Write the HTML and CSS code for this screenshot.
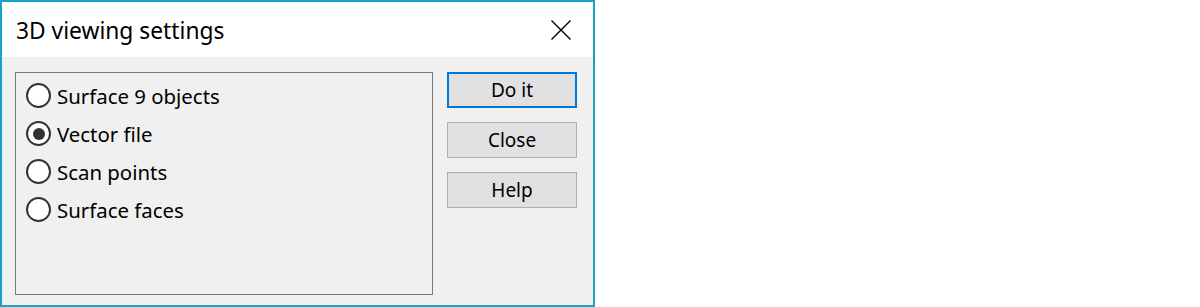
FILE: index.html
```html
<!DOCTYPE html>
<html>
<head>
<meta charset="utf-8" />
<title>3D viewing settings</title>
<link rel="stylesheet" href="styles.css">
</head>
<body>
<div class="dialog">
	<div class="titlebar">
		<span class="title">3D viewing settings</span>
		<span class="close">
			<svg width="20" height="20" viewBox="0 0 20 20">
				<path d="M0.5 0.5 L19.5 19.5 M19.5 0.5 L0.5 19.5" stroke="#000" stroke-width="1.4" fill="none"/>
			</svg>
		</span>
	</div>
	<div class="body">
		<div class="group">
			<label class="option"><span class="radio"></span>Surface 9 objects</label>
			<label class="option"><span class="radio checked"></span>Vector file</label>
			<label class="option"><span class="radio"></span>Scan points</label>
			<label class="option"><span class="radio"></span>Surface faces</label>
		</div>
		<div class="buttons">
			<div class="button default">Do it</div>
			<div class="button">Close</div>
			<div class="button">Help</div>
		</div>
	</div>
</div>
</body>
</html>
```
FILE: styles.css
```css
*{
	box-sizing: border-box;
	font-family: "Noto Sans", sans-serif;
	color: #000000;
}

body{
	margin: 0;
	background-color: #ffffff;
}

.dialog{
	width: 595px;
	height: 307px;
	border: 2px solid #1ba1c1;
	display: flex;
	flex-direction: column;
}

.titlebar{
	height: 55px;
	background-color: #ffffff;
	display: flex;
	align-items: center;
	justify-content: space-between;
	padding: 0 22px 0 14px;
}

.title{
	font-size: 22.8px;
	padding-top: 1px;
}

.close{
	display: flex;
	margin-top: 1px;
}

.body{
	flex: 1;
	background-color: #f0f0f0;
	display: flex;
	padding: 15px 16px 10px 13px;
	gap: 14px;
}

.group{
	width: 418px;
	border: 1px solid #7a7a7a;
	padding: 10px 0 0 10px;
	display: flex;
	flex-direction: column;
	gap: 13px;
}

.option{
	display: flex;
	align-items: center;
	height: 25px;
	font-size: 20.4px;
	gap: 6px;
}

.radio{
	width: 25px;
	height: 25px;
	border: 2px solid #333333;
	border-radius: 50%;
	background-color: #ffffff;
	display: flex;
	align-items: center;
	justify-content: center;
}

.radio.checked::after{
	content: "";
	width: 12px;
	height: 12px;
	border-radius: 50%;
	background-color: #333333;
}

.buttons{
	display: flex;
	flex-direction: column;
	gap: 14px;
}

.button{
	width: 130px;
	height: 36px;
	background-color: #e1e1e1;
	border: 1px solid #adadad;
	font-size: 19px;
	display: flex;
	align-items: center;
	justify-content: center;
}

.button.default{
	border: 2px solid #0078d7;
}
```
